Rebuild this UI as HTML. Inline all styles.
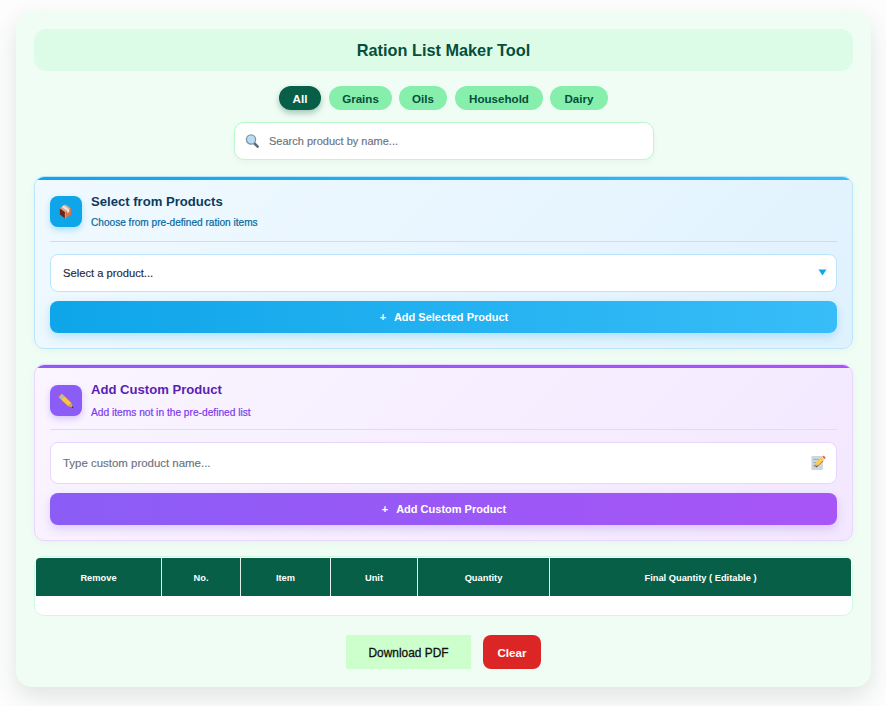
<!DOCTYPE html>
<html>
<head>
<meta charset="utf-8">
<style>
html,body{margin:0;padding:0;}
body{width:886px;height:706px;overflow:hidden;background:#fdfdfd;font-family:"Liberation Sans",sans-serif;position:relative;}
.a{position:absolute;box-sizing:border-box;}
.container{left:16px;top:11px;width:855px;height:676px;border-radius:16px;background:#f0fdf4;box-shadow:0 10px 25px rgba(20,50,40,.12);}
.titlebox{left:34px;top:29px;width:819px;height:42px;border-radius:12px;background:#dcfce7;text-align:center;line-height:42.5px;font-weight:700;font-size:16.3px;color:#064e3b;}
.pill{top:86px;height:24px;border-radius:12px;background:#86efac;color:#064e3b;font-weight:700;font-size:11.6px;text-align:center;line-height:25px;}
.pill.on{background:#065f46;color:#fff;box-shadow:0 3px 6px rgba(6,95,70,.35);}
.search{left:234px;top:122px;width:420px;height:38px;border:1.5px solid #bbf7d0;border-radius:10px;background:#fff;box-shadow:0 2px 6px rgba(0,0,0,.04);}
.stext{left:269px;top:122px;height:38px;line-height:39px;font-size:11px;color:#6b7280;-webkit-text-stroke:0.15px currentColor;}
.card{left:34px;width:819px;border-radius:10px;box-shadow:0 2px 8px rgba(0,0,0,.04);overflow:hidden;}
.bar{position:absolute;left:0;right:0;top:0;height:3px;}
.blue{top:176px;height:173px;border:1px solid #bae6fd;background:linear-gradient(135deg,#f0f9ff,#e0f2fe);}
.purple{top:364px;height:177px;border:1px solid #e9d5ff;background:linear-gradient(135deg,#faf5ff,#f3e8ff);}
.icon{left:50px;width:32px;height:31px;border-radius:8px;}
.h{left:91px;font-weight:700;font-size:13.1px;white-space:nowrap;line-height:16px;}
.sub{left:91px;font-size:10.1px;white-space:nowrap;line-height:14px;-webkit-text-stroke:0.2px currentColor;}
.div{left:50px;width:787px;height:1px;}
.field{left:50px;width:787px;background:#fff;border-radius:8px;}
.ftext{left:63px;font-size:11.2px;white-space:nowrap;-webkit-text-stroke:0.15px currentColor;}
.btn{left:50px;width:787px;height:32px;padding-left:1px;border-radius:8px;color:#fff;font-weight:700;font-size:11px;text-align:center;line-height:33.5px;white-space:pre;}
.table{left:34px;top:556px;width:819px;height:60px;border:1px solid #d1fae5;border-radius:10px;background:#fff;}
.thead{left:36px;top:558px;width:815px;height:38px;background:#065f46;border-radius:4px 4px 0 0;}
.th{top:558px;height:38px;line-height:40.5px;color:#fff;font-weight:700;font-size:9.3px;text-align:center;white-space:nowrap;}
.vl{top:558px;width:1px;height:38px;background:#e5efe9;}
.dl{left:346px;top:635px;width:125px;height:34px;background:#ccffcc;color:#111;font-size:11.9px;text-align:center;line-height:37px;-webkit-text-stroke:0.3px #111;}
.clr{left:483px;top:635px;width:58px;height:34px;border-radius:8px;background:#dc2626;color:#fff;font-weight:700;font-size:11.6px;text-align:center;line-height:35px;}
</style>
</head>
<body>
<div class="a container"></div>
<div class="a titlebox">Ration List Maker Tool</div>

<div class="a pill on" style="left:279px;width:42px;">All</div>
<div class="a pill" style="left:329px;width:63px;">Grains</div>
<div class="a pill" style="left:399px;width:48px;">Oils</div>
<div class="a pill" style="left:455px;width:88px;">Household</div>
<div class="a pill" style="left:550px;width:58px;">Dairy</div>

<div class="a search"></div>
<svg class="a" style="left:244px;top:133px" width="18" height="18" viewBox="0 0 18 18">
  <line x1="10.5" y1="10.5" x2="13.6" y2="13.6" stroke="#5b6b77" stroke-width="2.6" stroke-linecap="round"/>
  <circle cx="7" cy="6.5" r="4.6" fill="#bcdcf3" stroke="#8096a5" stroke-width="1.3"/>
</svg>
<div class="a stext">Search product by name...</div>

<!-- Blue card -->
<div class="a card blue"><div class="bar" style="background:linear-gradient(90deg,#0ea5e9,#38bdf8);"></div></div>
<div class="a icon" style="top:196px;background:#0ea5e9;box-shadow:0 3px 6px rgba(14,165,233,.3);"></div>
<svg class="a" style="left:58px;top:203px" width="16" height="17" viewBox="0 0 16 17">
  <polygon points="7.35,1.2 13,5.4 7.35,9.5 1.9,5.4" fill="#ee9c76"/>
  <polygon points="1.9,5.4 7.35,9.5 7.35,15.7 1.9,11.6" fill="#6e2414"/>
  <polygon points="13,5.4 7.35,9.5 7.35,15.7 13,11.6" fill="#dc7248"/>
  <polygon points="5.9,2.3 3.7,3.95 9.15,8.05 9.15,10.3 11.35,8.7 11.35,6.4" fill="#dfe3e6"/>
  <line x1="7.35" y1="9.5" x2="7.35" y2="15.7" stroke="#f2ab85" stroke-width="0.8"/>
</svg>
<div class="a h" style="top:194px;color:#0b3b5e;">Select from Products</div>
<div class="a sub" style="top:216px;color:#0369a1;">Choose from pre-defined ration items</div>
<div class="a div" style="top:241px;background:#bae6fd;"></div>
<div class="a field" style="top:254px;height:38px;border:1px solid #bae6fd;"></div>
<div class="a ftext" style="top:265px;color:#1f2937;line-height:16px;">Select a product...</div>
<svg class="a" style="left:818px;top:269px" width="9" height="7" viewBox="0 0 9 7"><polygon points="0.5,0.5 8.5,0.5 4.5,6.5" fill="#0ea5e9"/></svg>
<div class="a btn" style="top:301px;background:linear-gradient(90deg,#0ea5e9,#38bdf8);box-shadow:0 4px 10px rgba(14,165,233,.25);"><span style="margin-right:2px">+</span>  Add Selected Product</div>

<!-- Purple card -->
<div class="a card purple"><div class="bar" style="background:linear-gradient(90deg,#8b5cf6,#a855f7);"></div></div>
<div class="a icon" style="top:385px;background:#8b5cf6;box-shadow:0 3px 6px rgba(139,92,246,.3);"></div>
<svg class="a" style="left:44px;top:378px" width="46" height="42" viewBox="0 0 46 42">
  <g transform="translate(15.2,16.4) rotate(44)">
    <rect x="0" y="-2.3" width="2.4" height="4.6" rx="1" fill="#e8515a"/>
    <rect x="1.6" y="-2.3" width="3.2" height="4.6" fill="#a6c3cd"/>
    <rect x="4.8" y="-2.3" width="10" height="4.6" fill="#fcc43e"/>
    <polygon points="14.8,-2.3 14.8,2.3 19.6,0" fill="#d9a066"/>
    <polygon points="17.8,-0.9 17.8,0.9 19.9,0" fill="#292f33"/>
  </g>
</svg>
<div class="a h" style="top:382px;color:#5b21b6;">Add Custom Product</div>
<div class="a sub" style="top:405.5px;color:#7c3aed;font-size:10.2px;">Add items not in the pre-defined list</div>
<div class="a div" style="top:429px;background:#e9d5ff;"></div>
<div class="a field" style="top:442px;height:42px;border:1px solid #e9d5ff;"></div>
<div class="a ftext" style="top:455px;color:#6b7280;line-height:16px;font-size:11.45px;">Type custom product name...</div>
<svg class="a" style="left:800px;top:450px" width="36" height="26" viewBox="0 0 36 26">
  <rect x="11.4" y="5.9" width="11.4" height="14" rx="1.2" fill="#ccd6dd"/>
  <line x1="13.2" y1="9.5" x2="19.5" y2="9.5" stroke="#99aab5" stroke-width="0.9"/>
  <line x1="13.2" y1="12.5" x2="17" y2="12.5" stroke="#99aab5" stroke-width="0.9"/>
  <line x1="13.2" y1="15.5" x2="15" y2="15.5" stroke="#99aab5" stroke-width="0.9"/>
  <g transform="translate(14.4,16.6) rotate(-44)">
    <rect x="1" y="0.9" width="9.5" height="1.3" fill="#4a5560"/>
    <polygon points="0,0 3.2,-1.8 3.2,1.8" fill="#f4a46b"/>
    <polygon points="0,0 1.3,-0.75 1.3,0.75" fill="#292f33"/>
    <rect x="3.2" y="-1.8" width="8.6" height="3.6" fill="#ffcc4d"/>
    <rect x="11.8" y="-1.8" width="1.1" height="3.6" fill="#ccd6dd"/>
    <rect x="12.7" y="-1.7" width="1.7" height="3.4" rx="0.8" fill="#ea596e"/>
  </g>
</svg>
<div class="a btn" style="top:493px;background:linear-gradient(90deg,#8b5cf6,#a855f7);box-shadow:0 4px 10px rgba(139,92,246,.25);"><span style="margin-right:2.2px">+</span>  Add Custom Product</div>

<!-- Table -->
<div class="a table"></div>
<div class="a thead"></div>
<div class="a th" style="left:36px;width:125px;">Remove</div>
<div class="a th" style="left:162px;width:78px;">No.</div>
<div class="a th" style="left:241px;width:89px;">Item</div>
<div class="a th" style="left:331px;width:86px;">Unit</div>
<div class="a th" style="left:418px;width:131px;">Quantity</div>
<div class="a th" style="left:550px;width:301px;">Final Quantity ( Editable )</div>
<div class="a vl" style="left:161px;"></div>
<div class="a vl" style="left:240px;"></div>
<div class="a vl" style="left:330px;"></div>
<div class="a vl" style="left:417px;"></div>
<div class="a vl" style="left:549px;"></div>

<div class="a dl">Download PDF</div>
<div class="a clr">Clear</div>
</body>
</html>
